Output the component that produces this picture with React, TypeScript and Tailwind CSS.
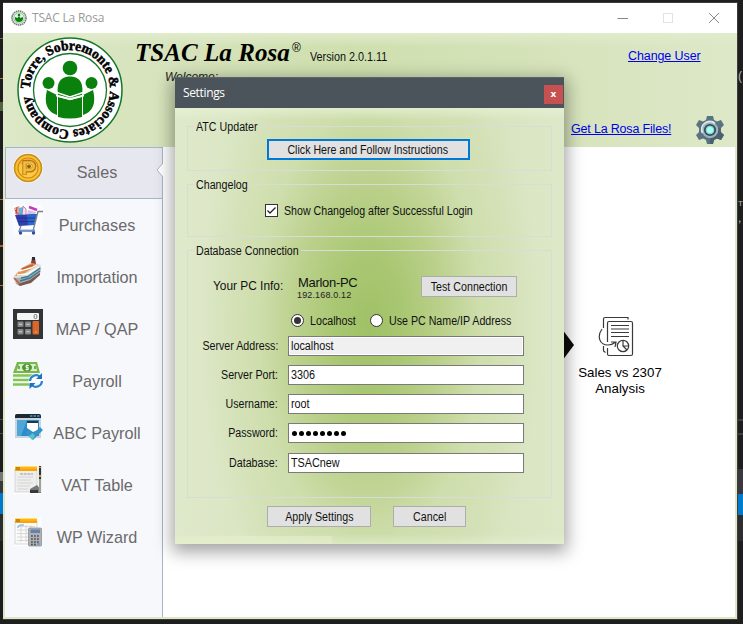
import type { ReactNode } from "react";

const sans = "font-['Liberation_Sans',Arial,sans-serif]";
const ui = "font-['Open_Sans','Noto_Sans',sans-serif]";

function Label({ children, className = "" }: { children: ReactNode; className?: string }) {
  return <span className={`inline-block whitespace-nowrap text-[12px] text-[#111] ${className}`}>{children}</span>;
}

function Logo({ className }: { className?: string }) {
  return (
    <svg viewBox="0 0 108 106" className={className}>
      <circle cx="54" cy="53" r="52" fill="#fff" stroke="#15762a" strokeWidth="1.5" />
      <circle cx="54" cy="53" r="36.5" fill="#fff" stroke="#15762a" strokeWidth="1.3" />
      <path id="ring" d="M14 53 A40 40 0 0 1 94 53 A40 40 0 0 1 14 53" fill="none" />
      <text fontFamily="Liberation Serif, serif" fontWeight="700" fontSize="14" fill="#000" stroke="#000" strokeWidth=".5">
        <textPath href="#ring" startOffset="1" textLength="244" lengthAdjust="spacingAndGlyphs">
          Torre, Sobremonte &amp; Associates Company
        </textPath>
      </text>
      <g fill="#0a800d">
        <circle cx="54" cy="31" r="7.3" />
        <circle cx="32.5" cy="46" r="6" />
        <circle cx="75.5" cy="46" r="6" />
        <path d="M42 58 C40 44 46 39.500 54 39.500 C62 39.500 68 44 66 58 L54 61 Z" />
        <path d="M31 53 Q26 73 41 78 V58 Z M77 53 Q82 73 67 78 V58 Z" />
        <path d="M42 60 L54 63 L66 60 V80 Q54 83 42 80 Z" />
      </g>
      <path d="M35 53.500 L54 60 L73 53.500 M40 58.500 L54 62.500 L68 58.500" fill="none" stroke="#fff" strokeWidth="1.5" />
      <path d="M41.500 61 V79 M66.500 61 V79" stroke="#fff" strokeWidth="1" />
    </svg>
  );
}

function TinyLogo() {
  return (
    <svg viewBox="0 0 16 16" className="h-4 w-4">
      <circle cx="8" cy="8" r="7" fill="#e8efe8" stroke="#6f7d70" strokeWidth="1.6" strokeDasharray="1.5 .6" />
      <circle cx="8" cy="8" r="5.2" fill="#e4f3e4" stroke="#7aa580" strokeWidth=".6" />
      <circle cx="8" cy="5" r="1.3" fill="#0a800d" />
      <path d="M4 7 L6.500 8 L8 6 L9.500 8 L12 7 V9 Q11.500 12 8 12 Q4.500 12 4 9 Z" fill="#0a800d" />
    </svg>
  );
}

function Coin() {
  return (
    <svg viewBox="0 0 30 30" className="size-[30px]">
      <circle cx="15" cy="15" r="15" fill="#fff" />
      <circle cx="15" cy="15" r="13.500" fill="#f9bd2e" stroke="#c08f1f" strokeWidth="1.6" />
      <circle cx="15" cy="15" r="10" fill="#ffc93f" stroke="#cf8a20" strokeWidth="1.2" />
      <path d="M7 11 A9 9 0 0 1 23 11 Z" fill="#ff9d3b" />
      <path d="M11.500 22 V9 H17 A4 4 0 0 1 17 17.500 H12" fill="none" stroke="#aa7621" strokeWidth="4.200" />
      <path d="M11.500 21.500 V9.500 H17 A3.500 3.500 0 0 1 17 17 H12" fill="none" stroke="#f3bd3a" strokeWidth="2.600" />
      <circle cx="16" cy="13.300" r="1.900" fill="#8b631e" />
    </svg>
  );
}

function Cart() {
  return (
    <svg viewBox="0 0 30 30" className="size-[30px]">
      <rect width="30" height="30" fill="#fff" opacity=".6" />
      <path d="M1 3 L6 1 L9 10 L3 10 Z" fill="#e5a4a0" />
      <path d="M6 3 L10 2 V11 H6 Z" fill="#58b9d6" />
      <path d="M10 1 L13 4 V11 H9 Z" fill="#eee4f0" stroke="#b16aaa" strokeWidth=".8" />
      <path d="M15 5 L23 7 L22 10 H14 Z" fill="#d8c0e0" />
      <path d="M16 2 L24 5" stroke="#c23cba" strokeWidth="2.500" />
      <path d="M2 5 L7 11 M4 2 L3 9" stroke="#cd4242" strokeWidth="1" />
      <path d="M2 10 L24 9 L21 20 L6 21 Z" fill="#2f3fae" />
      <path d="M14 10 L24 9 L21 20 L15 20 Z" fill="#2868ca" />
      <path d="M4 13 H22 M5 16.500 H21" stroke="#1d2b83" strokeWidth=".7" />
      <path d="M30 6.500 H25 L20 26 M8 21 L6 26 H22" fill="none" stroke="#77808d" strokeWidth="1.300" />
      <path d="M6 25.500 H22" stroke="#6f93d8" strokeWidth="1.800" />
      <circle cx="7.500" cy="28" r="1.700" fill="#344ba4" />
      <circle cx="20.500" cy="28" r="1.700" fill="#344ba4" />
    </svg>
  );
}

function Ship() {
  return (
    <svg viewBox="0 0 30 30" className="size-[30px]">
      <path d="M0 20 L8 11 L19 5 L28 8 L27 16 L17 24 L7 29 L2 26 Z" fill="#dedfe0" />
      <path d="M2 21 L16 20 L28 10 L27 17 L17 24 L7 29 L3 27 Z" fill="#a9adb1" />
      <path d="M5 27 L17 23 L27 16 L27 18 L18 26 L7 29 Z" fill="#7b5650" />
      <path d="M2 19 L9 11 L19 6 L25 8 L15 14 L8 19 Z" fill="#e09550" />
      <path d="M6 14 L18 11 L24 8 M4 18 L14 17 L26 10" fill="none" stroke="#fff" strokeWidth="1.300" />
      <path d="M8 21 L15 19.500 L27 11 M7 24 L17 21 L27 14" fill="none" stroke="#3a7d91" strokeWidth="1.500" />
      <path d="M1 21 L7 27 M9 12 L20 8" stroke="#c65b36" strokeWidth="1.500" />
      <path d="M18 6 L19 1 H22 L23 7" fill="#8b3a3a" />
      <path d="M19 0 H22 V3 H19 Z" fill="#283138" />
    </svg>
  );
}

function Calculator() {
  return (
    <svg viewBox="0 0 30 30" className="size-[30px]">
      <rect width="30" height="30" fill="#333435" />
      <rect x="4" y="4" width="22" height="7" rx="1" fill="#f4f5f5" />
      <rect x="21.200" y="5.500" width="2.600" height="4" rx="1" fill="none" stroke="#777" strokeWidth="1" />
      <g fill="#858687">
        <rect x="4.500" y="12.500" width="6" height="5.500" rx="1" />
        <rect x="12" y="12.500" width="6" height="5.500" rx="1" />
        <rect x="4.500" y="20" width="6" height="5.500" rx="1" />
        <rect x="12" y="20" width="6" height="5.500" rx="1" />
      </g>
      <rect x="19.500" y="12" width="6.500" height="13.500" rx="1" fill="#d9672c" />
      <path d="M6 15.300 H9 M13.500 15.300 H16.500 M6 22.800 H9 M13.500 22.800 H16.500" stroke="#d7d7d7" />
      <path d="M21.500 23 H24" stroke="#e8a27e" />
    </svg>
  );
}

function Money() {
  return (
    <svg viewBox="0 0 30 30" className="size-[30px]">
      <path d="M4 1 H24 L27 12 H0 Z" fill="#77b94c" />
      <path d="M6 3 H22.500 L24 10 H3.500 Z" fill="#d9efc9" />
      <ellipse cx="14" cy="6.500" rx="5" ry="4" fill="#4f9833" />
      <path d="M15.800 4.500 H13 V6.400 H15.300 V8.600 H12.400 M14 3.500 V9.500" fill="none" stroke="#fff" strokeWidth=".9" />
      <path d="M6 5 V8 M22 5 V8" stroke="#4f9833" strokeWidth="1.500" />
      <path d="M0 14.500 H26 M0 19 H22 M0 23.500 H18" stroke="#84c355" strokeWidth="2.500" />
      <path d="M0 16.500 H22 M0 21 H18" stroke="#e4f3d9" strokeWidth="1.200" />
      <circle cx="23" cy="20" r="7.500" fill="#fff" />
      <path d="M17 20 A6 6 0 0 1 27 15.800 M29 20 A6 6 0 0 1 19 24.200" fill="none" stroke="#2a86d0" strokeWidth="2.200" />
      <path d="M29 12 V18 H23 Z M16.500 28 V22 H22.500 Z" fill="#1a73c2" />
    </svg>
  );
}

function Browser() {
  return (
    <svg viewBox="0 0 30 30" className="size-[30px]">
      <path d="M2 2 Q2 1 4 1 H26 Q28 1 28 3 V25 H2 Z" fill="#c9d5de" />
      <path d="M2 5 V3 Q2 1 4 1 H26 Q28 1 28 3 V5 Z" fill="#1d2830" />
      <path d="M17 3 H27" stroke="#2f80b8" strokeWidth="2" strokeDasharray="2.500 1" />
      <rect x="4" y="7" width="22" height="16" fill="#2b8cc9" />
      <path d="M4 7 H14 L8 23 H4 Z" fill="#50a6d6" />
      <path d="M14 8 H25 V17 L20 19 L14 15 Z" fill="#fff" />
      <path d="M14 8 H25 V10 H14 Z" fill="#233644" />
      <path d="M12 20 L16 17 L20 21 L27 14 L30 17 L20 27 Z" fill="#3593c8" />
      <path d="M16 23 L20 20 L22 23 L19 27 Z" fill="#55c3d1" />
    </svg>
  );
}

function Sheet({ calc = false }: { calc?: boolean }) {
  return (
    <svg viewBox="0 0 30 30" className="size-[30px]">
      <rect x="1" y="1" width="27" height="28" fill="#fff" />
      <rect x="2" y="4" width="22" height="23" fill={calc ? "#fafafa" : "#eeeeee"} stroke="#ccc" strokeWidth=".8" />
      <rect x="2" y="1.500" width="22" height="4.500" fill="#ffb900" />
      <rect x="2" y="3.800" width="22" height="2" fill="#ff9d14" />
      <rect x="3" y="2" width="4" height="3" fill="#bd8b16" />
      {calc ? (
        <g>
          <path d="M4 9.500 H22 M4 13 H22 M4 16.500 H22 M4 20 H22 M4 23.500 H22 M8 8 V25 M13 8 V25 M18 8 V25" stroke="#d1d1d1" strokeWidth=".8" />
          <path d="M5 11 Q5 8 9 8 H11" fill="none" stroke="#8fc1ee" strokeWidth="1.400" />
          <rect x="15.500" y="11" width="13" height="18" rx="1" fill="#aeb0b3" stroke="#85878b" strokeWidth=".7" />
          <rect x="17.500" y="12.500" width="9.500" height="3.500" fill="#6482b0" />
          <path d="M18 19 H27 M18 22 H27 M18 25 H27 M18 27.500 H24" stroke="#4e5156" strokeWidth="1.500" strokeDasharray="1.800 1.200" />
          <path d="M24 27 H27" stroke="#5b9fe3" strokeWidth="1.500" />
        </g>
      ) : (
        <g>
          <path d="M7 9 H20" stroke="#999" strokeWidth="1" strokeDasharray="3 .7" />
          <path d="M5 12 H20 M4 15 H18 M5 18 H20 M4 21 H17 M5 24 H15" stroke="#d4d4d4" strokeWidth="1" />
          <path d="M17 27 V24 L24 20 L28 25 V28 H17 Z" fill="#777" />
          <path d="M17 25 H25 V28 H17 Z" fill="#34383d" />
          <path d="M27 1 V14" stroke="#34352e" strokeWidth="2.200" />
          <path d="M27 14 V27" stroke="#a0a29c" strokeWidth="2.200" />
          <path d="M27 10 V12 M27 2 V3" stroke="#c5a83f" strokeWidth="2" />
        </g>
      )}
    </svg>
  );
}

function Gear() {
  return (
    <svg viewBox="0 0 28 30" className="h-[30px] w-7">
      <path
        d="M11 1 H17 L18 5 L21 6.500 L25 5 L28 10 L25 13 V17 L28 20 L25 25 L21 23.500 L18 25 L17 29 H11 L10 25 L7 23.500 L3 25 L0 20 L3 17 V13 L0 10 L3 5 L7 6.500 L10 5 Z"
        fill="#5a7380"
      />
      <path d="M24.500 13 V17 L28 20 L25 25 L21 23.500 L18 25 L17 29 H14 V15 Z" fill="#4a606c" />
      <circle cx="14" cy="15" r="8.300" fill="#9fb3bd" />
      <path d="M6.500 18 A8 8 0 0 1 19 8.500" fill="none" stroke="#dce8ec" strokeWidth="1.800" />
      <circle cx="14" cy="15" r="5.200" fill="#a6f4ea" stroke="#344b57" strokeWidth="1.800" />
      <circle cx="14" cy="15" r="3.800" fill="#a9fff0" stroke="#61bdb9" strokeWidth=".7" />
    </svg>
  );
}

function ReportIcon() {
  return (
    <svg viewBox="0 0 36 42" className="-ml-[9px] h-[42px] w-9" fill="none" stroke="#3a3a3a" strokeWidth="1.200">
      <path d="M5.500 12 V3 Q5.500 1.500 7 1.500 H30 V3.500 M5.500 30 V35 L7.500 36.500" />
      <path d="M9.500 26 V7 Q9.500 5.500 11 5.500 H33 Q34.500 5.500 34.500 7 V38 Q34.500 39.500 33 39.500 H11 Q9.500 39.500 9.500 38 V32" />
      <path d="M13 9.500 H31 M13 13 H31 M13 16.500 H31 M13 20.500 H31" />
      <path d="M4 13 C-1 20 1 29 10 29 Q14 29 17 26.500 M13 26 L18 26 L17 31" />
      <circle cx="25" cy="30" r="5.700" fill="#fff" />
      <path d="M25 24.500 V30 H30.500 M25 30 L29 34" />
    </svg>
  );
}

const menu: { text: string; icon: ReactNode }[] = [
  { text: "Purchases", icon: <Cart /> },
  { text: "Importation", icon: <Ship /> },
  { text: "MAP / QAP", icon: <Calculator /> },
  { text: "Payroll", icon: <Money /> },
  { text: "ABC Payroll", icon: <Browser /> },
  { text: "VAT Table", icon: <Sheet /> },
  { text: "WP Wizard", icon: <Sheet calc /> },
];

function MenuRow({ text, icon, textTop = "mt-[9px]" }: { text: string; icon: ReactNode; textTop?: string }) {
  return (
    <div className="flex h-[52px] items-start pl-2 pt-[6px]">
      {icon}
      <span className={`-ml-[2px] w-[112px] whitespace-nowrap text-center text-[16.2px] leading-[22px] text-[#6a6a6a] ${textTop}`}>{text}</span>
    </div>
  );
}

function Field({ label, value, className = "", disabled = false }: { label: string; value: string; className?: string; disabled?: boolean }) {
  return (
    <div className={`flex h-5 items-center ${className}`}>
      <span className="flex w-[90px] justify-end">
        <Label className="origin-right scale-x-[0.89]">{label}</Label>
      </span>
      <span
        className={`ml-[10px] flex h-5 w-[236px] items-center border border-[#7a7a7a] pl-[2px] ${
          disabled ? "bg-[#f0f0f0] shadow-[inset_0_0_0_1px_#fff]" : "bg-white"
        }`}
      >
        {value === "••••••••" ? (
          <span className="flex gap-[2px] pl-px">
            {value.split("").map((_, i) => (
              <span key={i} className="size-[5px] rounded-full bg-black" />
            ))}
          </span>
        ) : (
          <Label className="origin-left scale-x-[0.9]">{value}</Label>
        )}
      </span>
    </div>
  );
}

function Button({ children, className = "" }: { children: ReactNode; className?: string }) {
  return (
    <button className={`flex h-[21px] items-center justify-center border border-[#adadad] bg-[#e1e1e1] ${className}`}>
      <Label className="scale-x-[0.89]">{children}</Label>
    </button>
  );
}

function Group({ title, className = "", titleMargin, children }: { title: string; className?: string; titleMargin: string; children: ReactNode }) {
  return (
    <fieldset className={`w-[365px] border border-[#d9dcd6] ${className}`}>
      <legend className="ml-[6px] h-[15px] pl-[2px] leading-[15px]">
        <Label className={`mt-px origin-left scale-x-[0.89] align-top leading-[15px] ${titleMargin}`}>{title}</Label>
      </legend>
      {children}
    </fieldset>
  );
}

function SettingsDialog() {
  return (
    <div className="absolute left-[175px] top-[77px] flex h-[467px] w-[389px] flex-col shadow-[0_5px_16px_3px_rgba(0,0,0,0.36)]">
      <div className="flex h-[31px] items-center justify-between border-t border-[#5c646a] bg-[#4c545b] pl-2 pr-px">
        <span className={`${ui} text-[12px] tracking-[-0.35px] text-white`}>Settings</span>
        <span className="mt-[3px] flex h-[19px] w-[19px] items-center justify-center bg-[#c75050] font-['DejaVu_Sans',sans-serif] text-[9px] font-bold leading-none text-white">
          x
        </span>
      </div>
      <div className="flex flex-1 flex-col bg-[linear-gradient(to_bottom,rgba(232,242,214,0.7),rgba(232,242,214,0)_12px,rgba(232,242,214,0)_426px,rgba(232,242,214,0.5)),radial-gradient(ellipse_170px_330px_at_50%_50%,#a0c166_0%,#a9c772_20%,#bad08a_42%,#cfdead_66%,rgba(214,226,186,0)_100%),linear-gradient(to_right,#dfe9cb,#d7e3be_30%,#d5e1ba_70%,#dde8c8)] pl-3 pt-[11px]">
        <Group title="ATC Updater" titleMargin="-mr-[4px]" className="h-[52px]">
          <button className="ml-[79px] mt-[5px] flex h-[21px] w-[203px] items-center justify-center border-2 border-[#0078d7] bg-[#e1e1e1]">
            <Label className="-ml-[2px] scale-x-[0.885]">Click Here and Follow Instructions</Label>
          </button>
        </Group>
        <Group title="Changelog" titleMargin="-mr-[4px]" className="mt-[6px] h-[60px]">
          <div className="ml-[77px] mt-[12px] flex h-[13px] items-center">
            <svg viewBox="0 0 13 13" className="size-[13px]">
              <rect x=".5" y=".5" width="12" height="12" fill="#fff" stroke="#333" />
              <path d="M2.500 6.500 L5 9 L10.500 3.500" fill="none" stroke="#222" strokeWidth="1.300" />
            </svg>
            <Label className="ml-[6px] origin-left scale-x-[0.887]">Show Changelog after Successful Login</Label>
          </div>
        </Group>
        <Group title="Database Connection" titleMargin="-mr-[10px]" className="mt-[6px] h-[255px]">
          <div className="flex h-[56px] items-start">
            <span className="ml-[25px] mt-[15px] w-[84px]">
              <Label className="origin-left scale-x-[0.99]">Your PC Info:</Label>
            </span>
            <span className="mt-[17px] flex w-[124px] flex-col">
              <span className="ml-px whitespace-nowrap text-[13px] leading-[15px] tracking-[-0.3px] text-[#111]">Marlon-PC</span>
              <span className="text-[9px] leading-[10px] tracking-[0.15px] text-[#222]">192.168.0.12</span>
            </span>
            <Button className="mt-[18px] w-[96px]">Test Connection</Button>
          </div>
          <div className="ml-[103px] flex h-[13px] items-center">
            <span className="flex size-[13px] items-center justify-center rounded-full border border-[#333] bg-white">
              <span className="size-[7px] rounded-full bg-[#333]" />
            </span>
            <Label className="ml-[6px] w-[60px] origin-left scale-x-[0.89]">Localhost</Label>
            <span className="size-[13px] rounded-full border border-[#333] bg-white" />
            <Label className="ml-[6px] origin-left scale-x-[0.888]">Use PC Name/IP Address</Label>
          </div>
          <Field label="Server Address:" value="localhost" disabled className="mt-[9px]" />
          <Field label="Server Port:" value="3306" className="mt-[9px]" />
          <Field label="Username:" value="root" className="mt-[9px]" />
          <Field label="Password:" value="••••••••" className="mt-[9px]" />
          <Field label="Database:" value="TSACnew" className="mt-[10px]" />
        </Group>
        <div className="ml-[80px] mt-2 flex gap-[22px]">
          <Button className="w-[104px]">Apply Settings</Button>
          <Button className="w-[73px]">Cancel</Button>
        </div>
        <div className="-ml-3 mt-auto h-2 w-[157px] bg-[#e4efcc]/60" />
      </div>
    </div>
  );
}

export default function App() {
  return (
    <div className={`relative flex h-[624px] w-[743px] overflow-hidden bg-[#1e1e1f] ${sans}`}>
      <div className="flex w-[3px] flex-col pt-[38px]">
        <div className="h-px bg-[#80604c]" />
        <div className="mt-[39px] h-px bg-[#a77852]" />
        <div className="mt-[23px] h-[9px] bg-[#52653e]" />
        <div className="mt-[88px] h-px bg-[#b86b3e]" />
        <div className="mt-[45px] h-[2px] bg-[#b05c38]" />
        <div className="mt-[38px] h-px bg-[#b96b50]" />
        <div className="mt-[133px] h-px bg-[#4a4a4c]" />
        <div className="mt-[13px] h-px bg-[#4a4a4c]" />
        <div className="mt-[38px] h-[9px] bg-[#777]" />
        <div className="h-3 bg-[#38383c]" />
        <div className="h-[21px] bg-[#007acc]" />
        <div className="h-[27px] bg-[#2d2d30]" />
      </div>
      <div className="mt-[2px] flex h-[618px] w-[735px] flex-col border-b border-r border-t border-[#3b3d3a] bg-[#dce8c6]">
        <div className="flex h-[30px] items-center bg-white">
          <span className="ml-2">
            <TinyLogo />
          </span>
          <span className={`${ui} ml-[5px] text-[12px] tracking-[-0.2px] text-[#999]`}>TSAC La Rosa</span>
          <svg viewBox="0 0 103 12" className="ml-auto mr-[17px] h-3 w-[103px]" fill="none" stroke="#888">
            <path d="M.500 6.500 H11" />
            <rect x="46.500" y="1.500" width="9" height="9" stroke="#e2e2e2" />
            <path d="M92 1 L102 11 M102 1 L92 11" />
          </svg>
        </div>
        <div className="flex h-[114px] bg-[linear-gradient(to_bottom,#e0ebcb,rgba(220,232,198,0)_14px),linear-gradient(to_right,#dce8c6,#d5e2b9_28%,#cfdfae_47%,#d6e3bb_75%,#dde8c8)]">
          <Logo className="ml-[13px] mt-[4px] h-[106px] w-[108px]" />
          <div className="ml-[11px] flex w-[301px] flex-col">
            <div className="flex items-start">
              <span className="mt-[5px] w-[157px] whitespace-nowrap font-['Monotype_Corsiva','Liberation_Serif',serif] text-[25px] font-bold italic leading-[30px] tracking-[0.05px] text-black">
                TSAC La Rosa
              </span>
              <span className="mt-[8px] w-[18px] text-[12px] leading-[14px] text-black">®</span>
              <Label className="mt-[15px] origin-left scale-x-[0.9]">Version 2.0.1.11</Label>
            </div>
            <span className="ml-[30px] mt-px text-[12px] italic leading-[16px] text-[#222]">Welcome:</span>
          </div>
          <div className="ml-auto flex w-[169px] flex-col">
            <a className="ml-[60px] mt-[15px] whitespace-nowrap text-[12.5px] leading-[16px] tracking-[-0.1px] text-[#0000ee] underline">Change User</a>
            <div className="mt-[51px] flex">
              <a className="ml-[3px] mt-[6px] w-[125px] whitespace-nowrap text-[12.5px] leading-[16px] tracking-[-0.18px] text-[#0000ee] underline">
                Get La Rosa Files!
              </a>
              <Gear />
            </div>
          </div>
        </div>
        <div className="mx-[2px] mb-[2px] flex flex-1 bg-white">
          <nav className="w-[158px] border-r border-[#a6b6c8] bg-[#f7f8fc]">
            <div className="relative mb-px h-[52px] border border-r-0 border-[#a6b6c8] bg-[#e7e7ef]">
              <div className="-ml-px -mt-px">
                <MenuRow text="Sales" icon={<Coin />} textTop="mt-[8px]" />
              </div>
              <svg viewBox="0 0 7 14" className="absolute -right-px top-[15px] h-[14px] w-[7px]">
                <path d="M7 0 L1 7 L7 14" fill="#fff" stroke="#a6b6c8" />
              </svg>
            </div>
            <div className="-mt-px">
              {menu.map((m) => (
                <MenuRow key={m.text} text={m.text} icon={m.icon} />
              ))}
            </div>
          </nav>
          <main className="flex flex-1 items-start justify-end">
            <svg viewBox="0 0 12 32" className="mt-[182px] h-8 w-3">
              <path d="M0 0 L12 16 L0 32 Z" fill="#0b0b0b" />
            </svg>
            <div className="mr-[69px] mt-[169px] flex w-[92px] flex-col items-center">
              <ReportIcon />
              <span className="mt-[7px] whitespace-nowrap text-center text-[13.33px] leading-[16px] text-black">
                Sales vs 2307
                <br />
                Analysis
              </span>
            </div>
          </main>
        </div>
      </div>
      <div className="flex w-[5px] flex-col">
        <span className="mt-[68px] h-4 text-[12px] leading-4 text-[#b8b8b8]">(</span>
        <span className="mt-[112px] h-4 text-[8px] leading-4 text-[#b8b8b8]">T</span>
        <span className="h-4 text-[12px] leading-3 text-[#b8b8b8]">,</span>
        <div className="mt-[191px] h-[2px] bg-[#3f3f42]" />
        <div className="mt-[12px] h-[2px] bg-[#3f3f42]" />
        <div className="mt-[34px] h-[25px] bg-[#38383e]" />
        <div className="h-[21px] bg-[#007acc]" />
        <div className="h-[26px] bg-[#2d2d30]" />
      </div>
      <SettingsDialog />
    </div>
  );
}
